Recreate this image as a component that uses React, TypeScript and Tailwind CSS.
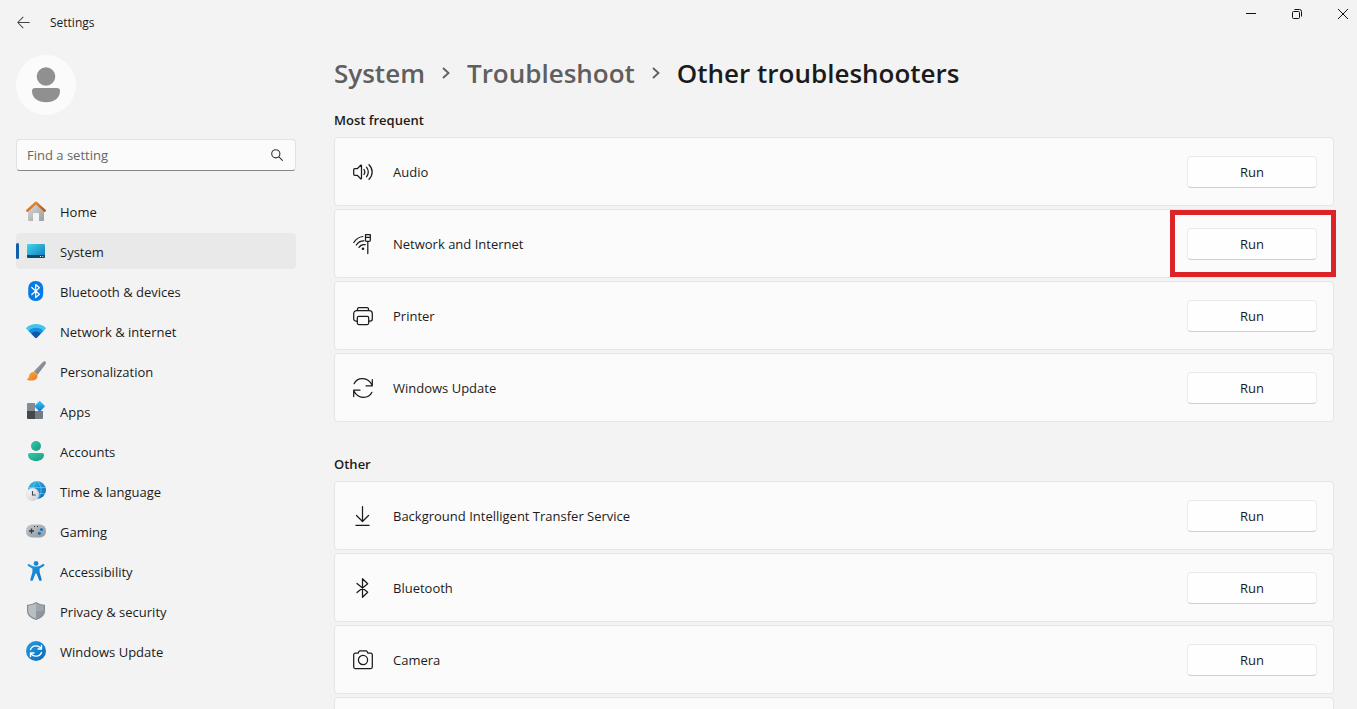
import { useState } from "react";
import type { ReactNode } from "react";

interface NavItem {
  label: string;
  icon: ReactNode;
}

interface Troubleshooter {
  name: string;
  icon: ReactNode;
  highlighted?: boolean;
}

function ColorIcon({ children }: { children: ReactNode }) {
  return (
    <svg viewBox="0 0 20 20" className="size-5 shrink-0" aria-hidden="true">
      {children}
    </svg>
  );
}

function LineIcon({ children }: { children: ReactNode }) {
  return (
    <svg
      viewBox="0 0 20 20"
      className="size-5 shrink-0 overflow-visible"
      fill="none"
      stroke="currentColor"
      strokeWidth="1.25"
      strokeLinecap="round"
      strokeLinejoin="round"
      aria-hidden="true"
    >
      {children}
    </svg>
  );
}

function Gradient({ id, from, to }: { id: string; from: string; to: string }) {
  return (
    <linearGradient id={id} x1="0" y1="0" x2="1" y2="1">
      <stop offset="0" stopColor={from} />
      <stop offset="1" stopColor={to} />
    </linearGradient>
  );
}

const navItems: NavItem[] = [
  {
    label: "Home",
    icon: (
      <ColorIcon>
        <defs>
          <Gradient id="home-wall" from="#dedede" to="#9c9c9c" />
          <Gradient id="home-roof" from="#f09a3a" to="#b9501c" />
        </defs>
        <path d="M2 9l8-7 8 7v10a1 1 0 0 1-1 1h-4v-7a1 1 0 0 0-1-1H8a1 1 0 0 0-1 1v7H3a1 1 0 0 1-1-1z" fill="url(#home-wall)" />
        <path d="M1.3 9.600L10 1.700l8.700 7.900" fill="none" stroke="url(#home-roof)" strokeWidth="2.500" strokeLinecap="round" strokeLinejoin="round" />
      </ColorIcon>
    ),
  },
  {
    label: "System",
    icon: (
      <ColorIcon>
        <defs>
          <Gradient id="system" from="#3fd6ee" to="#1277b8" />
        </defs>
        <rect x="1" y="3" width="18" height="14" rx="1.200" fill="url(#system)" />
        <path d="M1 14h18v1.800a1.200 1.200 0 0 1-1.200 1.200H2.200A1.200 1.200 0 0 1 1 15.800z" fill="#0b4a6f" />
        <path d="M14 15.500h1M16.300 15.500h1" stroke="#d9f1fb" strokeWidth="1" />
      </ColorIcon>
    ),
  },
  {
    label: "Bluetooth & devices",
    icon: (
      <ColorIcon>
        <rect x="2.200" width="15" height="20" rx="7" fill="#0a7be4" />
        <path d="M5.800 6.500l7.600 6.800-3.700 3.200v-13l3.700 3.200-7.600 6.800" fill="none" stroke="#fff" strokeWidth="1.200" strokeLinejoin="round" strokeLinecap="round" />
      </ColorIcon>
    ),
  },
  {
    label: "Network & internet",
    icon: (
      <ColorIcon>
        <path d="M10 3c3.700 0 7 1.300 9.600 3.700.4.400.4.800.1 1.100L10.700 16.700a1 1 0 0 1-1.400 0L.3 7.800c-.3-.3-.3-.7.100-1.100C3 4.300 6.300 3 10 3z" fill="#42c4f0" />
        <path d="M10 6.800c3 0 5.300 1 7.300 3.400l-6.600 6.500a1 1 0 0 1-1.400 0L2.700 10.200C4.700 7.800 7 6.800 10 6.800z" fill="#1790dc" />
        <path d="M10 10.500c2 0 3.300.7 4.600 2.300l-3.900 3.900a1 1 0 0 1-1.400 0l-3.900-3.900C6.700 11.200 8 10.500 10 10.500z" fill="#1057a8" />
      </ColorIcon>
    ),
  },
  {
    label: "Personalization",
    icon: (
      <ColorIcon>
        <defs>
          <Gradient id="brush-handle" from="#aab1b8" to="#656d75" />
          <Gradient id="brush-tip" from="#fbb040" to="#e9761f" />
        </defs>
        <path d="M19.400.6c.8.7.6 1.700 0 2.600l-7.800 10.600-3.900-3.200L16.600 1.200c.9-.9 2-1.200 2.800-.6z" fill="url(#brush-handle)" />
        <path d="M7.600 10.700l3.900 3.200c.300 3.700-2.300 5.600-5.900 5.600-1.900 0-3.900-.2-5-1.100 1.700-.5 2-1.500 2.400-3.300.6-2.700 2.300-4.200 4.600-4.400z" fill="url(#brush-tip)" />
      </ColorIcon>
    ),
  },
  {
    label: "Apps",
    icon: (
      <ColorIcon>
        <defs>
          <Gradient id="apps-tile" from="#3fc4f5" to="#0f74cc" />
        </defs>
        <path d="M2 2h7v8H1V3a1 1 0 0 1 1-1z" fill="#858b91" />
        <path d="M1 10h8v8H2a1 1 0 0 1-1-1z" fill="#43484d" />
        <path d="M9 10h8v7a1 1 0 0 1-1 1H9z" fill="#767c82" />
        <rect x="9.800" y="1.400" width="7.800" height="7.800" rx=".8" transform="rotate(45 13.700 5.300)" fill="url(#apps-tile)" />
      </ColorIcon>
    ),
  },
  {
    label: "Accounts",
    icon: (
      <ColorIcon>
        <defs>
          <Gradient id="accounts" from="#35c9a5" to="#159b82" />
        </defs>
        <circle cx="10" cy="5" r="5" fill="url(#accounts)" />
        <path d="M4 12h12a2 2 0 0 1 2 2c0 3.800-3.500 6-8 6s-8-2.200-8-6a2 2 0 0 1 2-2z" fill="url(#accounts)" />
      </ColorIcon>
    ),
  },
  {
    label: "Time & language",
    icon: (
      <ColorIcon>
        <defs>
          <Gradient id="globe" from="#35bdec" to="#0d64b5" />
          <Gradient id="clock" from="#fbfbfb" to="#c9cdd2" />
        </defs>
        <circle cx="11" cy="9" r="9" fill="url(#globe)" />
        <path d="M2.500 6.500h17M3 12.500h16.500M11 0c-5.500 5-5.500 13 0 18M11 0c5.500 5 5.500 13 0 18" fill="none" stroke="#7fdcf7" strokeOpacity=".7" strokeWidth=".8" />
        <circle cx="6.600" cy="13.400" r="6.300" fill="url(#clock)" stroke="#c9d2da" strokeWidth=".4" />
        <path d="M6.500 10v4h3.200" fill="none" stroke="#42484e" strokeWidth="1.100" />
      </ColorIcon>
    ),
  },
  {
    label: "Gaming",
    icon: (
      <ColorIcon>
        <defs>
          <Gradient id="gamepad" from="#c4c9ce" to="#8f969d" />
        </defs>
        <rect y="3.500" width="20" height="13" rx="6" fill="url(#gamepad)" />
        <path d="M5.500 7.500v5M3 10h5" stroke="#33383d" strokeWidth="1.300" />
        <path d="M8 5.500h1M11 5.500h1" stroke="#33383d" strokeWidth="1" />
        <circle cx="15.500" cy="8.500" r="1.600" fill="#1771c4" />
        <circle cx="13.300" cy="12.300" r="1.600" fill="#1771c4" />
      </ColorIcon>
    ),
  },
  {
    label: "Accessibility",
    icon: (
      <ColorIcon>
        <defs>
          <Gradient id="person" from="#239fe5" to="#0b6fc0" />
        </defs>
        <circle cx="10" cy="2.400" r="2.400" fill="url(#person)" />
        <path d="M3.500 3.200c2 1.500 4 2.400 6.500 2.400s4.500-.9 6.500-2.400c.6-.5 1.500-.3 1.800.3.300.6.100 1.200-.4 1.600-1.300 1-2.900 1.800-4.300 2.300v3.500l2 7.300c.2.800-.2 1.400-.8 1.600-.8.200-1.400-.1-1.700-.8L10.700 13c-.2-.6-1.200-.6-1.400 0L6.900 19c-.300.7-.9 1-1.700.8-.6-.2-1-.8-.8-1.600l2-7.300V7.400C5 6.900 3.400 6.100 2.100 5.100c-.5-.4-.7-1-.4-1.600.3-.6 1.200-.8 1.800-.3z" fill="url(#person)" />
      </ColorIcon>
    ),
  },
  {
    label: "Privacy & security",
    icon: (
      <ColorIcon>
        <path d="M10 1c2.500 1.600 5.500 2.600 9 2.800V10c0 4.500-3.600 7.200-9 9-5.400-1.800-9-4.500-9-9V3.800C4.500 3.600 7.500 2.600 10 1z" fill="#858b92" />
        <path d="M10 2.300c2.300 1.300 4.800 2.100 7.800 2.500V10H10z" fill="#a0a6ac" />
        <path d="M10 2.300C7.700 3.600 5.200 4.400 2.200 4.800V10c0 3.600 3 6 7.800 7.700z" fill="#b9bec3" />
        <path d="M10 10h7.800c0 3.600-3 6-7.800 7.700z" fill="#91979e" />
      </ColorIcon>
    ),
  },
  {
    label: "Windows Update",
    icon: (
      <ColorIcon>
        <defs>
          <Gradient id="update" from="#1fa0e4" to="#0b68bd" />
        </defs>
        <circle cx="10" cy="10" r="10" fill="url(#update)" />
        <path d="M4.500 8.500c1.700-4.600 8.300-5 11 -.5M15.500 4.500V8H12M15.500 11.500c-1.700 4.600-8.300 5-11 .5M4.500 15.500V12H8" fill="none" stroke="#fff" strokeWidth="1.400" strokeLinecap="round" strokeLinejoin="round" />
      </ColorIcon>
    ),
  },
];

const mostFrequent: Troubleshooter[] = [
  {
    name: "Audio",
    icon: (
      <LineIcon>
        <path d="M1.700 6.700h2.500l3.500-3.500c.300-.300.800-.1.800.3v13c0 .4-.5.6-.8.3l-3.500-3.500H1.700a1 1 0 0 1-1-1V7.700a1 1 0 0 1 1-1z" />
        <path d="M11 7.500c1 1.500 1 3.500 0 5M13.500 5.200c2.100 2.800 2.100 6.800 0 9.600M16 2.700c4.200 4 4.200 10.600 0 14.600" />
      </LineIcon>
    ),
  },
  {
    name: "Network and Internet",
    highlighted: true,
    icon: (
      <LineIcon>
        <path d="M.8 8.500C3 5 6.300 2.900 9.800 2.500M3.300 11C5 8.400 7.800 6.800 11 6.900M6 13.400c1.400-2.200 3.800-3.200 6.200-2.700" />
        <circle cx="10" cy="14.800" r="1.300" fill="currentColor" stroke="none" />
        <path d="M12.500.6h4.800v5.600a1.200 1.200 0 0 1-1.200 1.200h-2.400a1.200 1.200 0 0 1-1.200-1.200zM12.500 3.400h4.800M14.800 7.500v12" />
      </LineIcon>
    ),
  },
  {
    name: "Printer",
    icon: (
      <LineIcon>
        <path d="M4.500 4.500V3A1.500 1.500 0 0 1 6 1.500h8A1.500 1.500 0 0 1 15.500 3v1.500M4.500 4.500h11M4.300 15H2.700a2 2 0 0 1-2-2V7.500a3 3 0 0 1 3-3h12.600a3 3 0 0 1 3 3V13a2 2 0 0 1-2 2h-1.600" />
        <rect x="4.300" y="10.300" width="11.400" height="8.300" rx="1.500" />
      </LineIcon>
    ),
  },
  {
    name: "Windows Update",
    icon: (
      <LineIcon>
        <path d="M1.100 5.700C4.500-1.200 15 -1.500 19.300 7.500M19.300 1.500v6.300H13M18.900 14.300C15.500 21.200 5 21.500.7 12.500M.7 18.500v-6.300H7" />
      </LineIcon>
    ),
  },
];

const other: Troubleshooter[] = [
  {
    name: "Background Intelligent Transfer Service",
    icon: (
      <LineIcon>
        <path d="M9.500.5v15M3.500 9.500l6 6 6-6M3 19.400h13" />
      </LineIcon>
    ),
  },
  {
    name: "Bluetooth",
    icon: (
      <LineIcon>
        <path d="M4 5.500l10.700 8.800-5.200 5V.7l5.200 5L4 14.500" />
      </LineIcon>
    ),
  },
  {
    name: "Camera",
    icon: (
      <LineIcon>
        <path d="M7 .8h6a1.200 1.200 0 0 1 1.100.7l.8 1.700h2.900a1.500 1.500 0 0 1 1.500 1.500v12.300a1.500 1.500 0 0 1-1.500 1.500H2.200a1.500 1.500 0 0 1-1.500-1.500V4.700a1.500 1.500 0 0 1 1.500-1.500h2.900l.8-1.700A1.200 1.200 0 0 1 7 .8z" />
        <circle cx="10" cy="10" r="4.600" />
      </LineIcon>
    ),
  },
];

function TitleBar() {
  return (
    <header className="flex h-11 shrink-0 items-start justify-between overflow-hidden">
      <div className="flex h-11 items-center gap-5 pl-[17px] text-xs">
        <button type="button" aria-label="Back">
          <svg viewBox="0 0 14 14" className="size-[13px]" fill="none" stroke="#444" strokeWidth="1.1" strokeLinecap="round" strokeLinejoin="round">
            <path d="M13.300 7H1M6.500 1.300L.8 7l5.700 5.700" />
          </svg>
        </button>
        <span className="pt-0.5">Settings</span>
      </div>
      <div className="-mr-[9px] flex h-7">
        <button type="button" aria-label="Minimize" className="flex w-[46px] items-center justify-center">
          <svg viewBox="0 0 10 10" className="size-2.5" stroke="#111" fill="none">
            <path d="M0 4.500h10" />
          </svg>
        </button>
        <button type="button" aria-label="Restore" className="flex w-[46px] items-center justify-center">
          <svg viewBox="0 0 10 10" className="size-2.5" stroke="#111" fill="none">
            <rect x=".5" y="2.500" width="7" height="7" rx="1" />
            <path d="M2.500.5h5a2 2 0 0 1 2 2v5" />
          </svg>
        </button>
        <button type="button" aria-label="Close" className="flex w-[46px] items-center justify-center">
          <svg viewBox="0 0 10 10" className="size-2.5" stroke="#111" fill="none">
            <path d="M0 0l10 10M10 0L0 10" />
          </svg>
        </button>
      </div>
    </header>
  );
}

function Sidebar() {
  const [active, setActive] = useState("System");
  const [query, setQuery] = useState("");

  return (
    <aside className="w-[280px] shrink-0 pt-[11px]">
      <div className="flex size-[60px] items-center justify-center rounded-full bg-[#fbfbfb]">
        <svg viewBox="0 0 30 36" className="h-9 w-[30px]" fill="#909090" aria-label="User picture">
          <circle cx="15" cy="9.500" r="9.300" />
          <path d="M4 21h22a3 3 0 0 1 3 3c0 7-6 11.300-14 11.300S1 31 1 24a3 3 0 0 1 3-3z" />
        </svg>
      </div>

      <label className="mt-6 flex h-8 items-center rounded border border-b-[#868686] border-[#e2e2e2] bg-[#fbfbfb] pr-3 pl-2.5">
        <input
          type="text"
          aria-label="Find a setting"
          placeholder="Find a setting"
          value={query}
          onChange={(event) => setQuery(event.target.value)}
          className="min-w-0 flex-1 bg-transparent pt-0.5 outline-none placeholder:text-[#666]"
        />
        <svg viewBox="0 0 12 12" className="size-3" fill="none" stroke="#333" strokeWidth="1.1" strokeLinecap="round" aria-hidden="true">
          <circle cx="4.800" cy="4.800" r="4.100" />
          <path d="M7.900 7.900l3.500 3.500" />
        </svg>
      </label>

      <nav className="mt-[22px] flex flex-col gap-1">
        {navItems.map((item) => (
          <button
            key={item.label}
            type="button"
            onClick={() => setActive(item.label)}
            className={`flex h-9 items-center rounded text-left ${
              active === item.label ? "bg-[#e9e9e9]" : ""
            }`}
          >
            <span
              className={`mr-[7px] h-4 w-[3px] rounded-full ${
                active === item.label ? "bg-[#0f5fab]" : ""
              }`}
            />
            {item.icon}
            <span className="pt-1 pl-3.5">{item.label}</span>
          </button>
        ))}
      </nav>
    </aside>
  );
}

function Card({ children }: { children?: ReactNode }) {
  return (
    <li className="flex h-[69px] items-center rounded border border-[#e5e5e5] bg-[#fbfbfb] pr-4 pl-[18px]">
      {children}
    </li>
  );
}

function Section({
  title,
  items,
  children,
}: {
  title: string;
  items: Troubleshooter[];
  children?: ReactNode;
}) {
  return (
    <section>
      <h2 className="leading-5 font-semibold">{title}</h2>
      <ul className="mt-[7px] flex flex-col gap-[3px]">
        {items.map((item) => (
          <Card key={item.name}>
            {item.icon}
            <span className="flex-1 pt-0.5 pl-5">{item.name}</span>
            <div className="relative">
              <button
                type="button"
                aria-label={`Run ${item.name}`}
                className="h-8 w-[130px] rounded border border-[#ebebeb] border-b-[#d0d0d0] bg-[#fefefe] pt-0.5"
              >
                Run
              </button>
              {item.highlighted && (
                <div className="pointer-events-none absolute -top-[18px] -right-[19px] -bottom-[17px] -left-[17px] border-5 border-[#dc2328]" />
              )}
            </div>
          </Card>
        ))}
        {children}
      </ul>
    </section>
  );
}

function Chevron() {
  return (
    <svg viewBox="0 0 8 12" className="h-3 w-2" fill="none" stroke="#5f5f5f" strokeWidth="1.8" aria-hidden="true">
      <path d="M1 1l5.500 5L1 11" />
    </svg>
  );
}

export default function App() {
  return (
    <div className="flex h-screen flex-col overflow-hidden bg-[#f3f3f3] font-['Open_Sans','Noto_Sans',sans-serif] text-[13px] text-[#1b1b1b]">
      <TitleBar />
      <div className="flex min-h-0 flex-1 pr-[23px] pl-4">
        <Sidebar />
        <main className="ml-[38px] min-w-0 flex-1 pt-[11px]">
          <h1 className="flex h-9 items-center text-[26px] font-semibold">
            <a href="#system" className="text-[#5f5f5f]">
              System
            </a>
            <span className="px-[17px]">
              <Chevron />
            </span>
            <a href="#troubleshoot" className="text-[#5f5f5f]">
              Troubleshoot
            </a>
            <span className="px-[17px]">
              <Chevron />
            </span>
            <span>Other troubleshooters</span>
          </h1>
          <div className="mt-[19px] flex flex-col gap-8">
            <Section title="Most frequent" items={mostFrequent} />
            <Section title="Other" items={other}>
              <Card />
            </Section>
          </div>
        </main>
      </div>
    </div>
  );
}
